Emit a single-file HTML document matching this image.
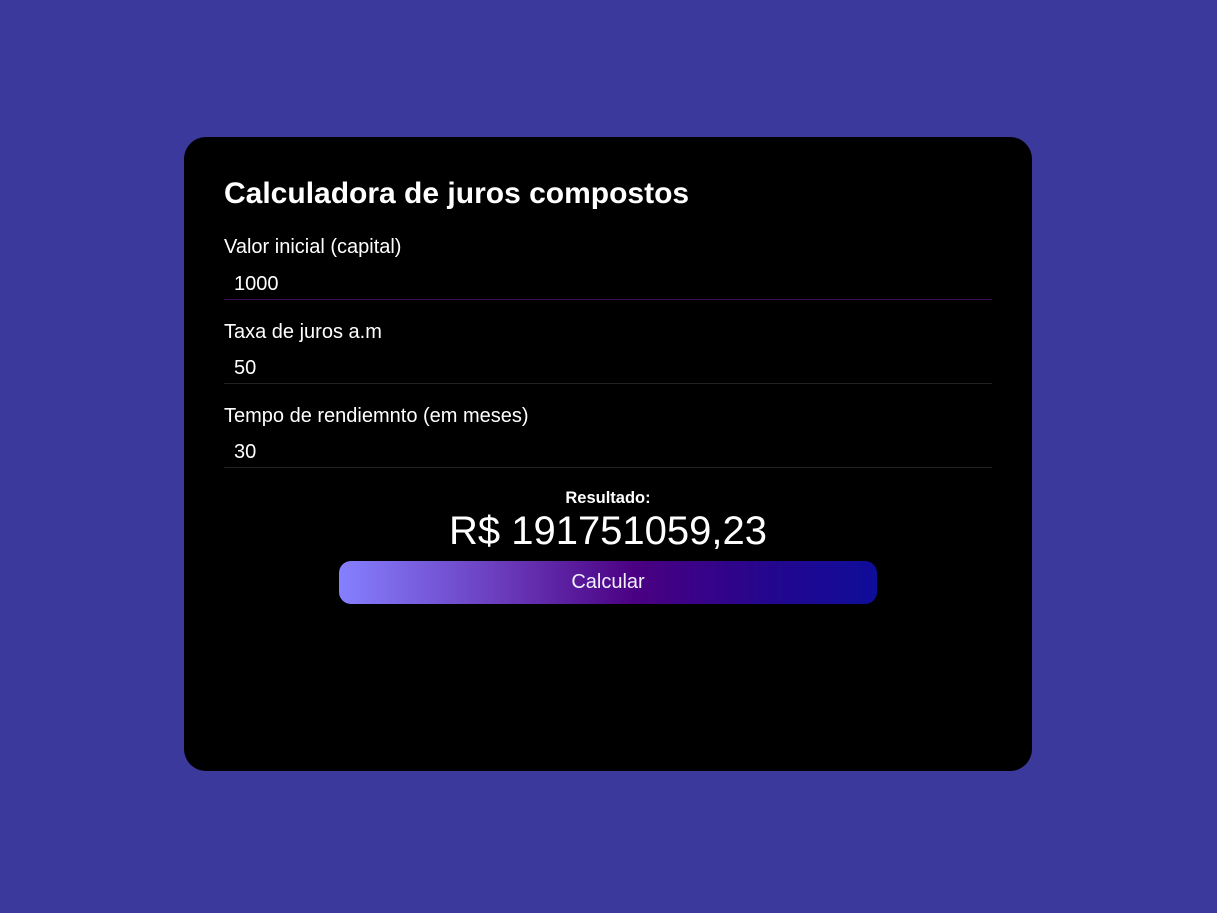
<!DOCTYPE html>
<html><head><meta charset="utf-8"><style>
*{margin:0;padding:0;box-sizing:border-box}
body{width:1217px;height:913px;background:#3c399c;font-family:"Liberation Sans",Arial,sans-serif;color:#fff;position:relative}
.card{position:absolute;left:184px;top:137px;width:848px;height:634px;background:#000;border-radius:22px;padding:0 40px}
h1{position:absolute;left:40px;font-size:30px;font-weight:bold;line-height:1}
.t{position:absolute;left:40px;font-size:20px;line-height:1}
.inp{position:absolute;left:40px;width:768px;height:1px;background:#222}
.res{position:absolute;left:0;width:848px;text-align:center}
.btn{position:absolute;left:155px;top:424px;width:538px;height:43px;border-radius:12px;background:linear-gradient(90deg,#8580ff 0%,#6a3cbc 30%,#4b0082 55%,#24068e 80%,#0e0d9a 100%);text-align:center;font-size:20px;line-height:43px;color:#f0f0ff}
</style></head><body>
<div class="card">
<h1 style="top:42px">Calculadora de juros compostos</h1>
<div class="t" style="top:100px">Valor inicial (capital)</div>
<div class="t" style="top:137px;left:50px">1000</div>
<div class="inp" style="top:162px;background:#3a0d55"></div>
<div class="t" style="top:185px">Taxa de juros a.m</div>
<div class="t" style="top:221px;left:50px">50</div>
<div class="inp" style="top:246px"></div>
<div class="t" style="top:269px">Tempo de rendiemnto (em meses)</div>
<div class="t" style="top:305px;left:50px">30</div>
<div class="inp" style="top:330px"></div>
<div class="res" style="top:352px;font-size:16.5px;font-weight:bold">Resultado:</div>
<div class="res" style="top:372px;font-size:40px">R$ 191751059,23</div>
<div class="btn">Calcular</div>
</div>
</body></html>
